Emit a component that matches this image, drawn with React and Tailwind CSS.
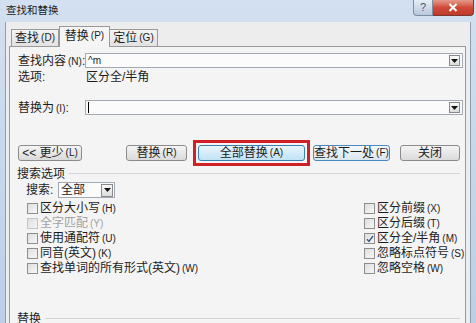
import React from 'react';

const Key = ({ k }) => <span className="text-[10px] leading-[12px] ml-[2px]">({k})</span>;

const Arrow = ({ className = '' }) => (
    <span className={`flex items-center justify-center border border-[#8a8a8a] bg-gradient-to-b from-[#fafafa] to-[#dcdcdc] ${className}`}>
        <svg width="7" height="4" viewBox="0 0 7 4">
            <path d="M0 0 H7 L3.5 4 Z" fill="#111" />
        </svg>
    </span>
);

const Check = ({ label, k, checked, disabled }) => (
    <div className={`h-[15px] flex items-center gap-[2px] leading-[13px] ${disabled ? 'text-[#a3a3a3]' : ''}`}>
        <span className={`w-[11px] h-[11px] shrink-0 border flex items-center justify-center bg-gradient-to-br from-[#dedede] to-[#f7f7f7] ${disabled ? 'border-[#c4c4c4]' : 'border-[#8e8e8e]'}`}>
            {checked && (
                <svg width="8" height="8" viewBox="0 0 8 8">
                    <path d="M1 4.2 L3 6.5 L7 1" stroke="#3f5686" strokeWidth="1.4" fill="none" />
                </svg>
            )}
        </span>
        <span className="whitespace-nowrap">{label}<Key k={k} /></span>
    </div>
);

const Btn = ({ children, w, blue, focus }) => (
    <div
        className={`h-[16px] flex items-center justify-center rounded-[3px] border leading-[13px] whitespace-nowrap ${w} ${
            blue
                ? 'border-[#3c7fb1] bg-gradient-to-b from-[#eaf6fd] to-[#bfe2f5]'
                : focus
                    ? 'border-[#4b8ac0] bg-gradient-to-b from-[#f4f9fc] to-[#d9e6ee]'
                    : 'border-[#8b8b8b] bg-gradient-to-b from-[#f5f5f5] to-[#dadada]'
        }`}
    >
        {children}
    </div>
);

const Input = ({ children }) => (
    <div className="w-[378px] h-[15px] border border-[#a3a9b2] bg-[#fbfbfb] flex items-center justify-between pl-[2px] pr-[2px]">
        <span className="text-[10px] leading-[10px]">{children}</span>
        <Arrow className="w-[11px] h-[11px]" />
    </div>
);

const left = [
    ['区分大小写', 'H'],
    ['全字匹配', 'Y', false, true],
    ['使用通配符', 'U'],
    ['同音(英文)', 'K'],
    ['查找单词的所有形式(英文)', 'W'],
];

const right = [
    ['区分前缀', 'X'],
    ['区分后缀', 'T'],
    ['区分全/半角', 'M', true],
    ['忽略标点符号', 'S'],
    ['忽略空格', 'W'],
];

export default function App() {
    return (
        <div className="w-[476px] h-[323px] overflow-hidden flex flex-col bg-gradient-to-b from-[#d2e0f1] to-[#bccfe7] text-[12px] leading-[14px] text-[#1c1c1c] font-['Liberation_Sans','Noto_Sans_CJK_SC',sans-serif]">
            {/* title bar */}
            <div className="h-[22px] shrink-0 flex items-start justify-between">
                <span className="pl-[6px] pt-[3px] text-[10.5px] leading-[14px] text-[#222]">查找和替换</span>
                <div className="flex mr-[2px]">
                    <div className="w-[20px] h-[16px] rounded-bl-[4px] border border-t-0 border-[#7d8ca0] bg-gradient-to-b from-[#e6eef7] to-[#b8c8dc] flex items-center justify-center text-[11px] leading-[11px] text-[#4a5a70]">?</div>
                    <div className="w-[41px] h-[16px] rounded-br-[4px] border border-t-0 border-l-0 border-[#7a3a34] bg-gradient-to-b from-[#e49a8c] via-[#cf4b38] to-[#c0392b] flex items-center justify-center">
                        <svg width="10" height="9" viewBox="0 0 10 9">
                            <path d="M1.5 1 L8.5 8 M8.5 1 L1.5 8" stroke="#fff" strokeWidth="2" />
                        </svg>
                    </div>
                </div>
            </div>

            {/* client area */}
            <div className="flex-1 ml-[5px] mr-[5px] border-l border-r border-[#8d9db2] bg-[#ededed] pt-[4px] pl-[3px] pr-[4px] flex flex-col">
                {/* tabs */}
                <div className="h-[20px] shrink-0 flex items-end pl-[2px]">
                    <div className="w-[48px] h-[17px] border border-b-0 border-[#9a9a9a] bg-gradient-to-b from-[#f3f3f3] to-[#e2e2e2] flex items-center justify-center">查找<Key k="D" /></div>
                    <div className="w-[51px] h-[21px] -mb-[1px] relative z-10 border border-b-0 border-[#9a9a9a] bg-[#f5f5f5] flex items-center justify-center pb-[2px]">替换<Key k="P" /></div>
                    <div className="w-[48px] h-[17px] border border-b-0 border-l-0 border-[#9a9a9a] bg-gradient-to-b from-[#f3f3f3] to-[#e2e2e2] flex items-center justify-center">定位<Key k="G" /></div>
                </div>

                {/* panel */}
                <div className="flex-1 border border-b-0 border-[#9a9a9a] bg-[#f4f4f4] flex flex-col">
                    <div className="mt-[6px] h-[15px] flex items-center pl-[8px]">
                        <span className="w-[67px] whitespace-nowrap">查找内容<Key k="N" />:</span>
                        <Input>^m</Input>
                    </div>
                    <div className="mt-[1px] h-[15px] flex items-center pl-[8px]">
                        <span className="w-[68px]">选项:</span>
                        <span>区分全/半角</span>
                    </div>
                    <div className="mt-[16px] h-[15px] flex items-center pl-[8px]">
                        <span className="w-[67px] whitespace-nowrap">替换为<Key k="I" />:</span>
                        <Input>
                            <span className="inline-block w-[1px] h-[11px] bg-black align-middle" />
                        </Input>
                    </div>

                    {/* buttons */}
                    <div className="mt-[25px] h-[26px] flex items-center pl-[8px]">
                        <Btn w="w-[64px]">&lt;&lt; 更少<Key k="L" /></Btn>
                        <div className="ml-[44px]"><Btn w="w-[61px]">替换<Key k="R" /></Btn></div>
                        <div className="ml-[6px] w-[117px] h-[26px] border-[3px] border-[#cf1f27] flex items-center justify-center">
                            <Btn w="w-[107px]" blue>全部替换<Key k="A" /></Btn>
                        </div>
                        <div className="ml-[3px]"><Btn w="w-[77px]" focus>查找下一处<Key k="F" /></Btn></div>
                        <div className="ml-[10px]"><Btn w="w-[60px]">关闭</Btn></div>
                    </div>

                    {/* search options */}
                    <div className="mt-[1px] h-[13px] flex items-center pl-[7px] pr-[5px]">
                        <span>搜索选项</span>
                        <span className="flex-1 ml-[4px] border-t border-[#d4d4d4]" />
                    </div>
                    <div className="mt-[2px] h-[16px] flex items-center pl-[16px]">
                        <span className="w-[32px]">搜索:</span>
                        <div className="w-[57px] h-[16px] border border-[#a3a9b2] bg-[#fbfbfb] flex items-center justify-between pl-[2px] pr-[1px]">
                            <span>全部</span>
                            <Arrow className="w-[12px] h-[13px]" />
                        </div>
                    </div>

                    <div className="mt-[3px] flex pl-[17px]">
                        <div className="w-[337px] flex flex-col">
                            {left.map(([l, k, c, d]) => (
                                <Check key={l} label={l} k={k} checked={c} disabled={d} />
                            ))}
                        </div>
                        <div className="flex flex-col">
                            {right.map(([l, k, c, d]) => (
                                <Check key={l} label={l} k={k} checked={c} disabled={d} />
                            ))}
                        </div>
                    </div>

                    <div className="mt-[36px] h-[13px] flex items-center pl-[7px] pr-[5px]">
                        <span>替换</span>
                        <span className="flex-1 ml-[4px] border-t border-[#d4d4d4]" />
                    </div>
                </div>
            </div>
        </div>
    );
}
